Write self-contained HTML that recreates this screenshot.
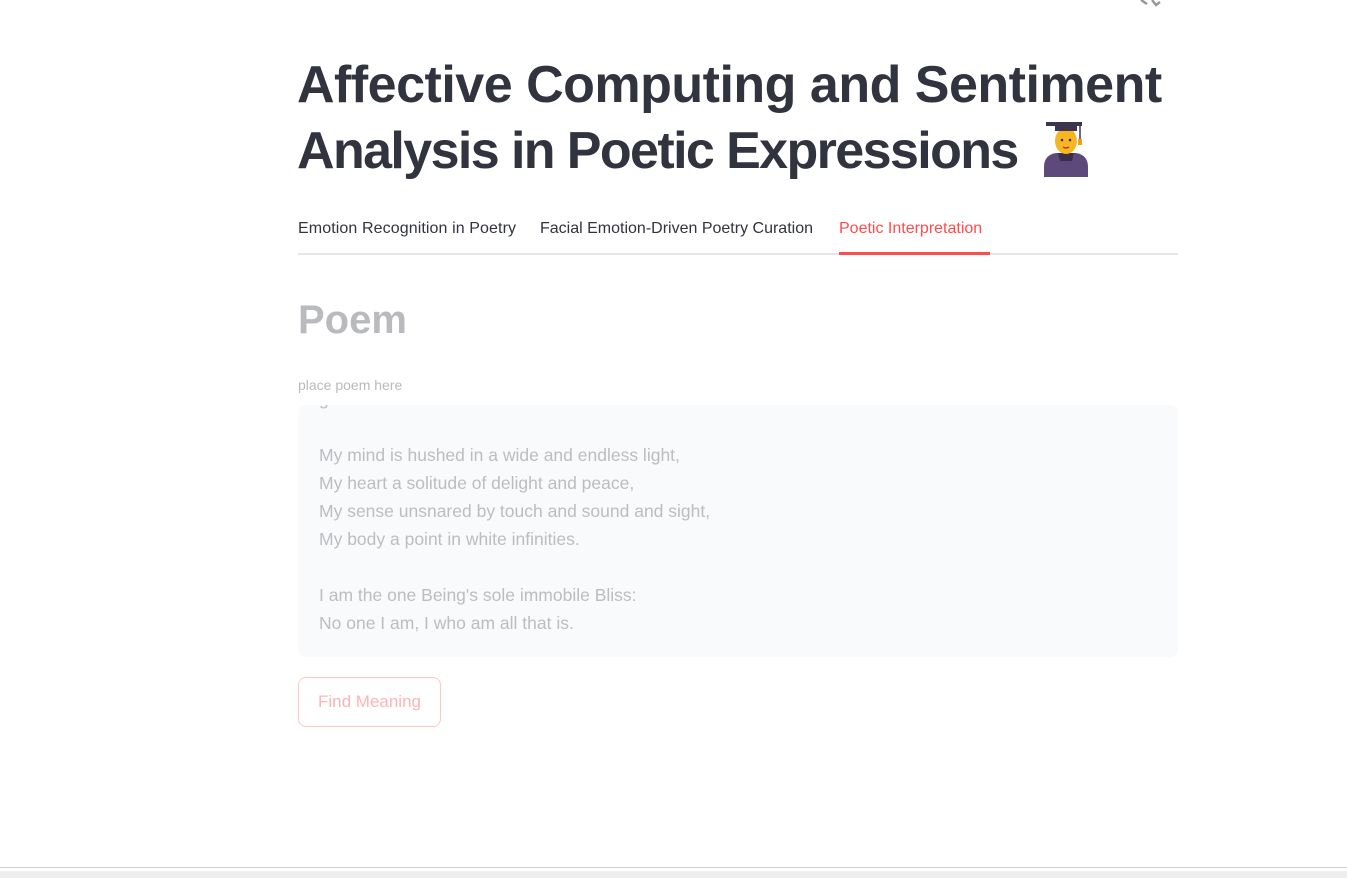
<!DOCTYPE html>
<html><head><meta charset="utf-8"><style>
html,body{margin:0;padding:0;background:#fff;width:1347px;height:878px;overflow:hidden;font-family:"Liberation Sans",sans-serif;}
.abs{position:absolute}
h1{position:absolute;left:297px;top:52px;margin:0;font-size:52px;line-height:66px;font-weight:700;color:#31333f;letter-spacing:-0.5px;white-space:nowrap}
.tab{position:absolute;top:220px;font-size:16px;letter-spacing:0.1px;color:#31333f;white-space:nowrap}
</style></head><body>
<svg class="abs" style="left:1138px;top:0" width="26" height="8"><path d="M3 0 L9 4 M14 0 L18 5 L22 2" stroke="#999" stroke-width="2.5" fill="none"/></svg>
<h1>Affective Computing and Sentiment<br><span style="letter-spacing:-1.6px">Analysis in Poetic Expressions</span></h1>
<svg class="abs" style="left:1042px;top:121px" width="48" height="56" viewBox="0 0 48 56">
<path d="M2 56 L2 46 Q2 34 14 32 L34 32 Q46 34 46 46 L46 56 Z" fill="#5d4a7a"/>
<path d="M16 32 L32 32 L30 40 L18 40 Z" fill="#3a2f4a"/>
<ellipse cx="24" cy="20" rx="11" ry="13" fill="#f6b624"/>
<rect x="4" y="1" width="36" height="4" fill="#3d3550"/>
<rect x="13" y="4" width="22" height="6" fill="#3d3550"/>
<line x1="38" y1="4" x2="38" y2="20" stroke="#3d3550" stroke-width="1.5"/>
<rect x="36" y="18" width="4" height="6" fill="#f0a020"/>
<circle cx="20" cy="19" r="1.3" fill="#402a20"/><circle cx="28" cy="19" r="1.3" fill="#402a20"/>
<path d="M21 26 Q24 28 27 26" stroke="#a03030" stroke-width="1.3" fill="none"/>
</svg>
<div class="tab" style="left:298px">Emotion Recognition in Poetry</div>
<div class="tab" style="left:540px;letter-spacing:0">Facial Emotion-Driven Poetry Curation</div>
<div class="tab" style="left:839px;color:#ff4b4b;letter-spacing:0">Poetic Interpretation</div>
<div class="abs" style="left:298px;top:253px;width:880px;height:2px;background:#e6e6ea"></div>
<div class="abs" style="left:839px;top:252px;width:151px;height:3px;background:#ff4b4b"></div>
<div class="abs" style="left:298px;top:298px;font-size:40px;font-weight:700;color:#b9babe">Poem</div>
<div class="abs" style="left:298px;top:377px;font-size:14px;color:#b9babe">place poem here</div>
<div class="abs" style="left:298px;top:405px;width:880px;height:252px;background:#f9fafb;border-radius:8px;overflow:hidden">
<div style="position:absolute;left:21px;top:-20px;font-size:17.5px;line-height:28px;color:#bcbdc1;white-space:pre">g

My mind is hushed in a wide and endless light,
My heart a solitude of delight and peace,
My sense unsnared by touch and sound and sight,
My body a point in white infinities.

I am the one Being's sole immobile Bliss:
No one I am, I who am all that is.</div></div>
<div class="abs" style="left:298px;top:677px;width:141px;height:48px;border:1px solid #ffc7c7;border-radius:8px;box-sizing:content-box;color:#ffb3b3;font-size:17px;line-height:48px;text-align:center">Find Meaning</div>
<div class="abs" style="left:0;top:867px;width:1347px;height:1px;background:#d0d0d0"></div>
<div class="abs" style="left:0;top:871px;width:1347px;height:7px;background:#eeeeee"></div>
</body></html>
